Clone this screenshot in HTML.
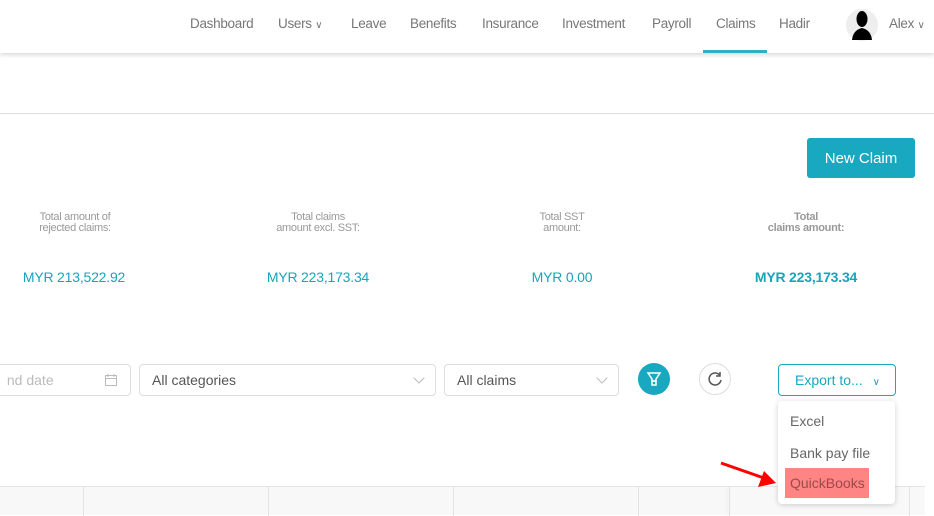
<!DOCTYPE html>
<html><head><meta charset="utf-8"><style>
*{box-sizing:border-box;margin:0;padding:0}
body{width:934px;height:515px;overflow:hidden;background:#fff;font-family:"Liberation Sans",sans-serif;position:relative;color:#666}
.nav{position:absolute;left:0;top:0;width:934px;height:53px;background:#fff;box-shadow:0 2px 4px rgba(0,0,0,.15);z-index:2}
.nav span{position:absolute;top:16px;font-size:13.5px;color:#777;letter-spacing:-.3px}
.ul{position:absolute;left:703px;top:50px;width:64px;height:3px;background:#2eb0c4}
.hr{position:absolute;left:0;top:113px;width:934px;height:1px;background:#ddd}
.btn{position:absolute;left:807px;top:138px;width:108px;height:40px;background:#18a8bf;border-radius:3px;color:#fff;font-size:15px;text-align:center;line-height:41px}
.lbl{position:absolute;font-size:11px;color:#999;text-align:center;line-height:11px;width:160px;letter-spacing:-.3px}
.val{position:absolute;font-size:14px;color:#1aa3bb;text-align:center;width:180px;top:269px;letter-spacing:-.2px}
.box{position:absolute;top:364px;height:32px;border:1px solid #ddd;border-radius:4px;font-size:14px;color:#555;padding-left:12px;line-height:30px}
.chev{position:absolute;right:12px;top:9px;width:8px;height:8px;border-right:1px solid #bbb;border-bottom:1px solid #bbb;transform:rotate(45deg)}
.tbl{position:absolute;left:0;top:486px;width:925px;height:29px;background:#f8f8f8;border-top:1px solid #e5e5e5}
.tbl i{position:absolute;top:0;width:1px;height:29px;background:#e3e3e3}
.menu{position:absolute;left:778px;top:401px;width:117px;height:103px;background:#fff;border-radius:4px;box-shadow:0 1px 6px rgba(0,0,0,.18);z-index:3}
.menu div{position:absolute;left:12px;font-size:14px;color:#666}
</style></head><body>
<div class="nav">
<span style="left:190px">Dashboard</span>
<span style="left:278px">Users <small style="font-size:10px">∨</small></span>
<span style="left:351px">Leave</span>
<span style="left:410px">Benefits</span>
<span style="left:482px">Insurance</span>
<span style="left:562px">Investment</span>
<span style="left:652px">Payroll</span>
<span style="left:716px">Claims</span>
<span style="left:779px">Hadir</span>
<svg style="position:absolute;left:846px;top:9px" width="32" height="32" viewBox="0 0 32 32"><circle cx="16" cy="16" r="16" fill="#eee"/><ellipse cx="16" cy="10" rx="5.5" ry="8" fill="#000"/><path d="M6 31 Q7 21 16 19 Q25 21 26 31 Z" fill="#000"/></svg>
<span style="left:889px">Alex <small style="font-size:10px">∨</small></span>
<div class="ul"></div>
</div>
<div class="hr"></div>
<div class="btn">New Claim</div>
<div class="lbl" style="left:-5px;top:212px">Total amount of<br>rejected claims:</div>
<div class="lbl" style="left:238px;top:212px">Total claims<br>amount excl. SST:</div>
<div class="lbl" style="left:482px;top:212px">Total SST<br>amount:</div>
<div class="lbl" style="left:726px;top:212px;font-weight:bold">Total<br>claims amount:</div>
<div class="val" style="left:-16px">MYR 213,522.92</div>
<div class="val" style="left:228px">MYR 223,173.34</div>
<div class="val" style="left:472px">MYR 0.00</div>
<div class="val" style="left:716px;font-weight:bold">MYR 223,173.34</div>
<div class="box" style="left:-10px;width:141px;color:#bbb">&nbsp;nd date<svg style="position:absolute;right:12px;top:8px" width="14" height="14" viewBox="0 0 14 14" fill="none" stroke="#bbb"><rect x="1.5" y="2.5" width="11" height="10"/><path d="M1.5 5.5h11M4 1v3M10 1v3"/></svg></div>
<div class="box" style="left:139px;width:297px">All categories<div class="chev"></div></div>
<div class="box" style="left:444px;width:175px">All claims<div class="chev"></div></div>
<svg style="position:absolute;left:638px;top:363px" width="32" height="32" viewBox="0 0 32 32"><circle cx="16" cy="16" r="16" fill="#18a8bf"/><path d="M10 10h12l-4 6v2h-4v-2z" fill="none" stroke="#fff" stroke-width="1.5"/><rect x="14" y="18" width="4" height="4" fill="none" stroke="#fff" stroke-width="1.5"/></svg>
<svg style="position:absolute;left:699px;top:363px" width="32" height="32" viewBox="0 0 32 32"><circle cx="16" cy="16" r="15.5" fill="#fff" stroke="#ddd"/><path d="M21 12.5A6 6 0 1 0 22 17" fill="none" stroke="#555" stroke-width="1.5"/><path d="M21 9v4h-4" fill="none" stroke="#555" stroke-width="1.5"/></svg>
<div class="box" style="left:778px;width:118px;border-color:#18a8bf;color:#18a8bf;padding-left:16px">Export to... <span style="font-size:10px;margin-left:6px">∨</span></div>
<div class="tbl"><i style="left:83px"></i><i style="left:268px"></i><i style="left:453px"></i><i style="left:638px"></i><i style="left:729px;box-shadow:-2px 0 4px rgba(0,0,0,.1)"></i><i style="left:909px"></i></div>
<div class="menu">
<div style="top:12px">Excel</div>
<div style="top:44px">Bank pay file</div>
<div style="top:67px;left:7px;width:84px;height:30px;background:#ff8585;padding-left:5px;line-height:31px;color:#9a4a4a">QuickBooks</div>
</div>
<svg style="position:absolute;left:718px;top:460px;z-index:4" width="62" height="30"><line x1="3" y1="3" x2="46" y2="18" stroke="#f00" stroke-width="3"/><path d="M58 23 L40 27 L46 11 Z" fill="#f00"/></svg>
</body></html>
